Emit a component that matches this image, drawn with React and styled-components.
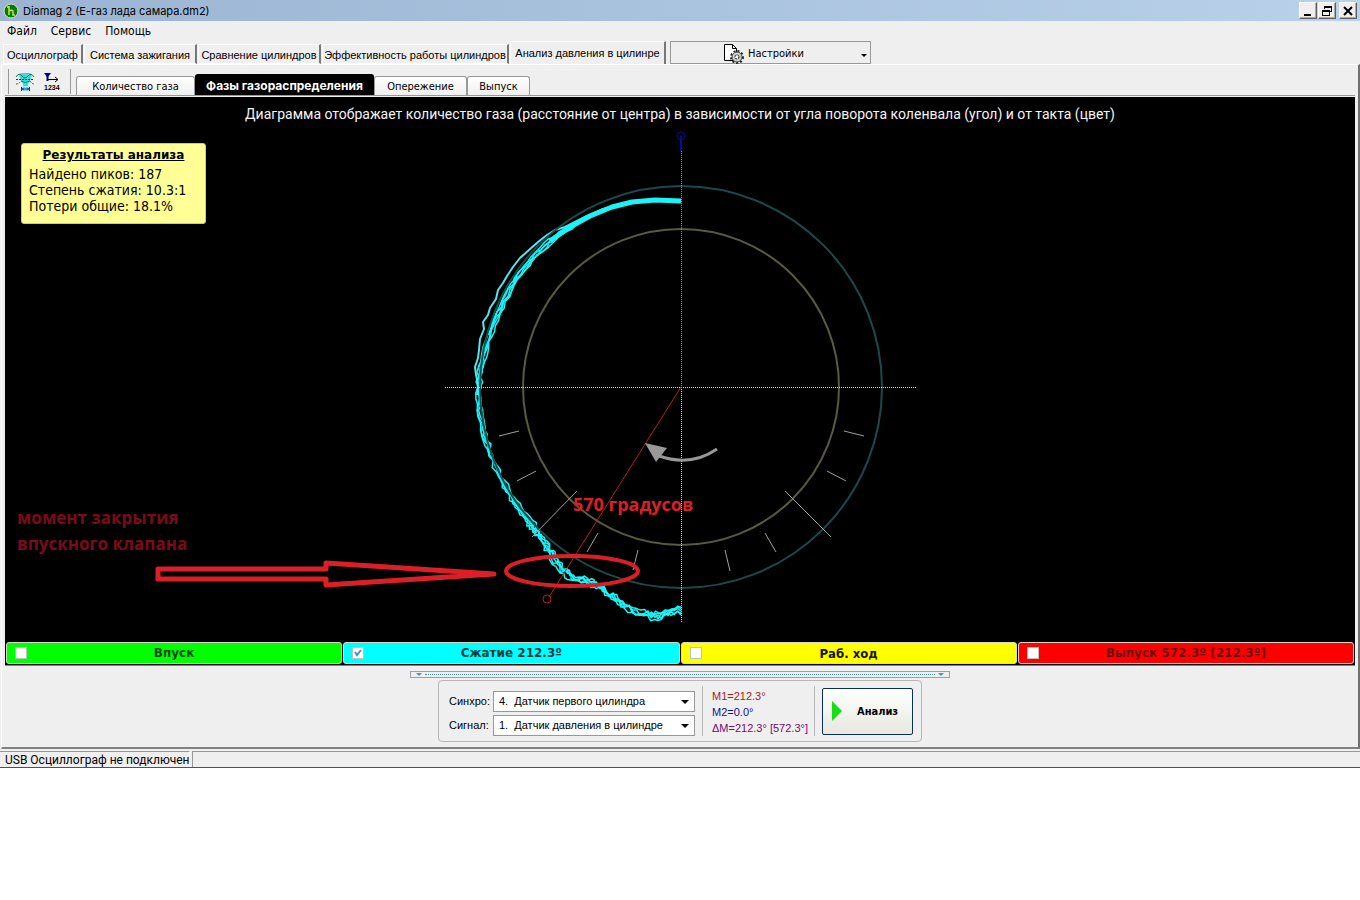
import React, { useState } from "react";
import styled, { createGlobalStyle } from "styled-components";

const mainTabs = [
    { text: "Осциллограф", width: 80 },
    { text: "Система зажигания", width: 113 },
    { text: "Сравнение цилиндров", width: 123 },
    { text: "Эффективность работы цилиндров", width: 187 },
    { text: "Анализ давления в цилинре", width: 156 }
];

const subTabs = [
    { text: "Количество газа", width: 119 },
    { text: "Фазы газораспределения", width: 179 },
    { text: "Опережение", width: 93 },
    { text: "Выпуск", width: 63 }
];

const strokes = [
    { id: "intake", text: "Впуск", color: "#00ff00", ink: "#0a4a0a", wide: true },
    { id: "compression", text: "Сжатие 212.3º", color: "#00ffff", ink: "#063c3c", wide: true },
    { id: "power", text: "Раб. ход", color: "#ffff00", ink: "#141400" },
    { id: "exhaust", text: "Выпуск 572.3º [212.3º]", color: "#ff0000", ink: "#6b0a0a", wide: true }
];

// all the diagram points are counted from the crankshaft centre
const gasCurve = [
    [0, -186], [-26, -187], [-49, -185], [-69, -180], [-91, -171], [-111, -160], [-131, -146],
    [-149, -128], [-165, -108], [-177, -86], [-188, -62], [-195, -40], [-200, -20], [-202, 0],
    [-201, 23], [-197, 48], [-190, 68], [-181, 90], [-171, 108], [-161, 122], [-151, 136],
    [-141, 149], [-131, 163], [-126, 174], [-116, 185], [-106, 191], [-91, 195], [-81, 200],
    [-69, 210], [-56, 219], [-41, 227], [-26, 229], [-13, 227], [0, 222]
];

const strayCurve = "M-60 -182 L-78 -178 L-96 -170 L-116 -160 L-126 -157 L-134 -152 L-143 -145 L-152 -137 L-161 -129 L-168 -120 L-174 -111 L-178 -104 L-183 -97 L-185 -88 L-191 -79 L-193 -72 L-198 -65 L-197 -58 L-201 -48 L-202 -37 L-203 -29 L-206 -20 L-205 -12 L-203 -4 L-204 8";

const ticks = [
    [-182, 49, -162, 44], [-164, 94, -145, 84], [-149, 150, -104, 104], [-94, 165, -83, 146], [-48, 183, -43, 163],
    [183, 49, 163, 44], [165, 94, 146, 84], [150, 150, 104, 104], [95, 165, 84, 146], [49, 184, 44, 163]
];

function makeTrace(seed, index) {
    let s = seed * 7919;
    const random = () => {
        s = (s * 1103515245 + 12345) % 2147483648;
        return s / 2147483648 - 0.5;
    };
    const shift = index - 2;
    const points = [];

    for (let i = 0; i < gasCurve.length - 1; i++) {
        const [x1, y1] = gasCurve[i];
        const [x2, y2] = gasCurve[i + 1];
        const spread = i < 5 ? 1 : i < 12 ? 3 : i < 20 ? 4 : 7;
        const steps = i < 5 ? 2 : 4;
        for (let k = 0; k < steps; k++) {
            const t = k / steps;
            const x = x1 + (x2 - x1) * t;
            const y = y1 + (y2 - y1) * t;
            const r = Math.hypot(x, y);
            const d = (i < 5 ? 0 : shift) + random() * spread;
            points.push(`${(x + x / r * d).toFixed(1)},${(y + y / r * d).toFixed(1)}`);
        }
    }
    points.push(`0,${220 + index * 2}`);
    return points.join(" ");
}

const traces = [1, 2, 3, 4, 5].map(makeTrace);

function PhaseDiagram() {
    return (
        <Diagram viewBox="-676 -290 1350 545">
            <g fill="none" stroke="#18f4f8" strokeWidth="1.5" strokeLinejoin="round">
                {traces.map((points) => <polyline key={points} points={points} />)}
                <path d={strayCurve} stroke="#58e4e8" strokeWidth="2" />
                <path d="M0 -186 L-26 -187 L-49 -185 L-69 -180 L-91 -171 L-111 -160 L-131 -146" strokeWidth="5" />
            </g>
            <g fill="none" strokeWidth="2">
                <circle r="201" stroke="#1c4a4c" />
                <circle r="158" stroke="#5a5a3c" />
            </g>
            <g stroke="#d8d8d8" strokeDasharray="1 1" shapeRendering="crispEdges">
                <path d="M-236 0 H236" />
                <path d="M0 0 V236" />
                <path d="M0 -236 V0" stroke="#7c7cff" />
            </g>
            <g stroke="#a0a0a0" strokeWidth="1">
                {ticks.map(([x1, y1, x2, y2]) => (
                    <line key={`${x1} ${y1}`} x1={x1} y1={y1} x2={x2} y2={y2} />
                ))}
            </g>
            <g fill="none" stroke="#0a0a96" strokeWidth="1">
                <circle cx="0" cy="-251" r="4" />
                <path d="M0 -251 V-236" strokeWidth="2" />
            </g>
            <g fill="none" stroke="#b41e1e" strokeWidth="1">
                <path d="M0 0 L-132 210" />
                <circle cx="-134" cy="212" r="4" />
            </g>
            <path d="M-22 69 Q10 80 36 62" fill="none" stroke="#989898" strokeWidth="3" />
            <path d="M-36 56 L-14 61 L-25 75 Z" fill="#989898" />
            <g fill="none" stroke="#dc1f26" strokeWidth="4">
                <ellipse cx="-109" cy="184" rx="66" ry="15" />
                <path d="M-523 182 H-355 V176 L-187 187 L-355 198 V192 H-523 Z" strokeWidth="5" strokeLinejoin="round" />
            </g>
            <Remark x="-108" y="124" fill="#dc1f26">570 градусов</Remark>
            <Remark x="-664" y="137" fill="#7c0a1a" $small>момент закрытия</Remark>
            <Remark x="-664" y="163" fill="#7c0a1a" $small>впускного клапана</Remark>
        </Diagram>
    );
}

export default function App() {
    const [tab, setTab] = useState(4);
    const [subTab, setSubTab] = useState(1);

    return (
        <Window>
            <GlobalStyle />
            <TitleBar>
                <svg width="16" height="16" viewBox="0 0 16 16">
                    <circle cx="8" cy="8" r="7" fill="#087808" stroke="#d8e8c8" />
                    <path d="M6 3 V12 M4 4 H6 M6 8 Q10 6 10 9 V12 H12" fill="none" stroke="#b8e85c" strokeWidth="1.5" />
                </svg>
                <h1>Diamag 2 (E-газ лада самара.dm2)</h1>
                <WindowButton aria-label="Свернуть">
                    <svg width="12" height="12"><path d="M2 10 H9" stroke="#000" strokeWidth="2" /></svg>
                </WindowButton>
                <WindowButton aria-label="Восстановить">
                    <svg width="12" height="12" viewBox="0 0 12 12" fill="none" stroke="#000" shapeRendering="crispEdges">
                        <path d="M3.5 4 V1.5 H10.5 V6.5 H8 M3 2.5 H11 M1.5 5.5 H8.5 V10.5 H1.5 Z M1 6.5 H9" />
                    </svg>
                </WindowButton>
                <WindowButton aria-label="Закрыть" $apart>
                    <svg width="12" height="12"><path d="M2 2 L10 10 M10 2 L2 10" stroke="#000" strokeWidth="2" /></svg>
                </WindowButton>
            </TitleBar>

            <MenuBar>
                <button>Файл</button>
                <button>Сервис</button>
                <button>Помощь</button>
            </MenuBar>

            <MainTabs>
                {mainTabs.map((item, i) => (
                    <MainTab key={item.text} $width={item.width} $active={i === tab} onClick={() => setTab(i)}>
                        {item.text}
                    </MainTab>
                ))}
                <SettingsButton>
                    <svg width="22" height="20" viewBox="0 0 22 20" fill="none" stroke="#000">
                        <path d="M1.5 0.5 H9.5 L13.5 4.5 V16.5 H1.5 Z" fill="#fff" />
                        <path d="M9.5 0.5 V4.5 H13.5" />
                        <circle cx="14" cy="13" r="6" stroke="#222" strokeWidth="2" strokeDasharray="2 2" />
                        <circle cx="14" cy="13" r="5" fill="#c8d0c8" stroke="#444" />
                        <circle cx="14" cy="13" r="2" fill="#fff" strokeDasharray="2 1" />
                    </svg>
                    <span>Настройки</span>
                    <svg className="arrow" width="6" height="4"><path d="M0 0 H6 L3 3 Z" /></svg>
                </SettingsButton>
            </MainTabs>

            <Page>
                <ToolRow>
                    <Tools>
                        <button aria-label="Фазы">
                            <svg width="20" height="20" viewBox="0 0 20 20" fill="none">
                                <path d="M6 1 H15 L17 3 L15 9 L13 12 V14 H15 V19 H6 V14 H8 V12 L6 9 L4 3 Z" fill="#38dce0" />
                                <path d="M1 5 Q4 0 7 4 Q10 8 13 4 Q16 0 19 5" stroke="#107850" />
                                <path d="M1 7.5 H19" stroke="#183838" strokeDasharray="2 1" />
                                <path d="M6 9 Q10 12 15 9" stroke="#108060" />
                                <path d="M1 12 Q4 12 6 9 M15 9 Q17 12 19 12" stroke="#c83838" strokeDasharray="2 1" />
                                <path d="M6 14 H15 V19 H6 Z" fill="#a8f4f8" />
                                <path d="M6.5 15 V19 M14.5 15 V19 M7 17 H14 M9 15.5 L7.5 17 L9 18.5 M12 15.5 L13.5 17 L12 18.5" stroke="#083080" />
                            </svg>
                        </button>
                        <button aria-label="Синхронизация">
                            <svg width="20" height="20" viewBox="0 0 20 20" fill="none">
                                <path d="M1 1 H8 L5 5 H4 Z" fill="#000090" />
                                <path d="M4.500 3 V9" stroke="#000090" strokeWidth="2" />
                                <path d="M5 7.5 H15 M12 5 L15 7.500 L12 10" stroke="#000" />
                                <IconDigits x="1" y="18">1234</IconDigits>
                            </svg>
                        </button>
                    </Tools>
                    {subTabs.map((item, i) => (
                        <SubTab key={item.text} $width={item.width} $active={i === subTab} onClick={() => setSubTab(i)}>
                            {item.text}
                        </SubTab>
                    ))}
                </ToolRow>

                <Plot>
                    <PhaseDiagram />
                    <PlotTitle>
                        Диаграмма отображает количество газа (расстояние от центра) в зависимости от угла поворота коленвала (угол) и от такта (цвет)
                    </PlotTitle>
                    <Results>
                        <h2>Результаты анализа</h2>
                        <p>Найдено пиков: 187</p>
                        <p>Степень сжатия: 10.3:1</p>
                        <p>Потери общие: 18.1%</p>
                    </Results>
                    <Legend>
                        {strokes.map((item) => (
                            <LegendItem key={item.id} $color={item.color} $ink={item.ink} $wide={item.wide}>
                                <input type="checkbox" defaultChecked={item.id === "compression"} />
                                <span>{item.text}</span>
                            </LegendItem>
                        ))}
                    </Legend>
                </Plot>

                <Splitter>
                    <svg width="8" height="4"><path d="M1 0 H7 L4 3 Z" fill="#4a90c0" /></svg>
                    <i />
                    <svg width="8" height="4"><path d="M1 0 H7 L4 3 Z" fill="#4a90c0" /></svg>
                </Splitter>

                <ControlPanel>
                    <Fields>
                        <label htmlFor="sync">Синхро:</label>
                        <SelectBox>
                            <select id="sync"><option>4.&nbsp; Датчик первого цилиндра</option></select>
                            <svg width="8" height="4"><path d="M0 0 H8 L4 4 Z" /></svg>
                        </SelectBox>
                        <label htmlFor="signal">Сигнал:</label>
                        <SelectBox>
                            <select id="signal"><option>1.&nbsp; Датчик давления в цилиндре</option></select>
                            <svg width="8" height="4"><path d="M0 0 H8 L4 4 Z" /></svg>
                        </SelectBox>
                    </Fields>
                    <Markers>
                        <Marker $color="#b01818">M1=212.3°</Marker>
                        <Marker $color="#10109c">M2=0.0°</Marker>
                        <Marker $color="#780878">ΔM=212.3° [572.3°]</Marker>
                    </Markers>
                    <AnalyzeButton>
                        <svg width="10" height="20"><path d="M0 0 L10 10 L0 20 Z" fill="#14e014" /></svg>
                        <span>Анализ</span>
                    </AnalyzeButton>
                </ControlPanel>
            </Page>

            <StatusBar>
                <span>USB Осциллограф не подключен</span>
                <i />
            </StatusBar>
        </Window>
    );
}

const GlobalStyle = createGlobalStyle`
    body{
        margin: 0;
        background: #fff;
        font-family: "Liberation Sans", sans-serif;
        font-size: 11px;
        color: #000;
    }

    *{
        box-sizing: border-box;
    }

    button, select, input{
        font: inherit;
        color: inherit;
        margin: 0;
    }

    h1, h2, p{
        margin: 0;
    }
`;

const Window = styled.div`
    background: #efefef;
    border-bottom: 1px solid #40546c;
`;

const TitleBar = styled.header`
    height: 21px;
    display: flex;
    align-items: center;
    padding: 0 3px;
    background: linear-gradient(90deg, #9ab4d2, #b9d1ea);

    h1{
        flex: 1;
        padding-left: 4px;
        font-family: Inter, sans-serif;
        font-size: 11px;
        font-weight: 400;
    }
`;

const WindowButton = styled.button`
    width: 18px;
    height: 17px;
    padding: 0;
    display: flex;
    align-items: center;
    justify-content: center;
    background: #efefef;
    border: 1px solid;
    border-color: #fff #606060 #606060 #fff;
    box-shadow: inset -1px -1px 0 #a8a8a8;
    margin-left: ${(props) => (props.$apart ? "3px" : "1px")};
`;

const MenuBar = styled.nav`
    height: 20px;
    display: flex;
    align-items: center;
    gap: 14px;
    padding-left: 7px;

    button{
        border: 0;
        padding: 0;
        background: none;
        font-family: "DejaVu Sans Condensed", sans-serif;
        font-size: 12px;
    }
`;

const MainTabs = styled.div`
    height: 23px;
    display: flex;
    align-items: flex-end;
    padding-left: 3px;
`;

const MainTab = styled.button`
    flex: 0 1 ${(props) => props.$width}px;
    height: ${(props) => (props.$active ? 23 : 20)}px;
    padding: ${(props) => (props.$active ? 0 : "2px")} 0 0;
    margin-right: ${(props) => (props.$active ? 4 : 1)}px;
    white-space: nowrap;
    background: #efefef;
    border: 1px solid #fff;
    border-right: 2px solid #787878;
    border-bottom: ${(props) => (props.$active ? "0" : "1px solid #fff")};
`;

const SettingsButton = styled.button`
    position: relative;
    width: 201px;
    height: 23px;
    padding: 2px 14px 0 0;
    display: flex;
    align-items: center;
    justify-content: center;
    gap: 3px;
    background: #efefef;
    border: 1px solid #989898;
    font-family: "DejaVu Sans Condensed", sans-serif;

    .arrow{
        position: absolute;
        right: 3px;
        top: 12px;
    }
`;

const Page = styled.main`
    border: 1px solid #fff;
    border-right: 2px solid #707070;
    border-bottom: 2px solid #808080;
    margin: 0 0 0 1px;
    padding: 0 3px 5px;
`;

const ToolRow = styled.div`
    height: 31px;
    display: flex;
    align-items: flex-end;
    border-bottom: 1px solid #989898;
`;

const Tools = styled.div`
    display: flex;
    align-items: center;
    gap: 8px;
    height: 25px;
    width: 63px;
    margin: 0 5px 1px 3px;
    padding-left: 6px;
    border-left: 1px solid #989898;
    border-right: 1px solid #989898;

    button{
        width: 20px;
        height: 20px;
        padding: 0;
        border: 0;
        background: none;
    }
`;

const IconDigits = styled.text`
    fill: #000;
    font-family: "Liberation Sans", sans-serif;
    font-size: 7px;
    font-weight: 700;
`;

const SubTab = styled.button`
    flex: 0 1 ${(props) => props.$width}px;
    height: ${(props) => (props.$active ? 21 : 19)}px;
    padding: 0;
    white-space: nowrap;
    border: 1px solid ${(props) => (props.$active ? "#000" : "#989898")};
    border-bottom: 0;
    border-radius: 3px 3px 0 0;
    background: ${(props) => (props.$active ? "#000" : "linear-gradient(#fff, #efefef)")};
    color: ${(props) => (props.$active ? "#fff" : "#000")};
    font-family: ${(props) => (props.$active ? "Inter" : '"DejaVu Sans Condensed"')}, sans-serif;
    font-size: ${(props) => (props.$active ? 12 : 11)}px;
    font-weight: ${(props) => (props.$active ? 700 : 400)};
`;

const Plot = styled.section`
    position: relative;
    margin-top: 1px;
    background: #000;
    border-bottom: 1px solid #808080;
`;

const Diagram = styled.svg`
    display: block;
    width: 100%;
`;

const Remark = styled.text`
    font-family: "Open Sans", "Noto Sans", sans-serif;
    font-size: ${(props) => (props.$small ? 17 : 18)}px;
    font-weight: 700;
`;

const PlotTitle = styled.p`
    position: absolute;
    top: 9px;
    left: 0;
    width: 100%;
    text-align: center;
    color: #f4f4f4;
    font-family: Roboto, sans-serif;
    font-size: 14px;
    line-height: 16px;
`;

const Results = styled.div`
    position: absolute;
    top: 46px;
    left: 16px;
    width: 185px;
    padding: 3px 7px 9px;
    border: 1px solid #c8c890;
    border-radius: 3px;
    background: #ffff96;
    font-family: "DejaVu Sans Condensed", sans-serif;
    font-size: 14px;
    line-height: 16px;

    h2{
        margin-bottom: 3px;
        text-align: center;
        text-decoration: underline;
        font-family: "DejaVu Sans", sans-serif;
        font-size: 12px;
        line-height: 16px;
        font-weight: 700;
    }
`;

const Legend = styled.div`
    display: grid;
    grid-template-columns: repeat(4, 1fr);
    gap: 1px;
    padding: 0 1px 1px;
`;

const LegendItem = styled.label`
    height: 22px;
    display: grid;
    grid-template-columns: 12px 1fr 12px;
    align-items: center;
    padding: 0 8px;
    background: ${(props) => props.$color};
    color: ${(props) => props.$ink};
    border: 1px solid #d8d8c8;
    border-radius: 3px;
    font-family: ${(props) => (props.$wide ? '"DejaVu Sans"' : '"DejaVu Sans Condensed"')}, sans-serif;
    font-size: ${(props) => (props.$wide ? 12 : 13)}px;
    font-weight: 700;

    span{
        text-align: center;
    }

    input{
        appearance: none;
        width: 12px;
        height: 12px;
        background: #fff;
        border: 1px solid #b8c8b8;
    }

    input:checked{
        background: #fff url("data:image/svg+xml,%3Csvg xmlns='http://www.w3.org/2000/svg' viewBox='0 0 10 10'%3E%3Cpath d='M2 4 L4 7 L8 2' fill='none' stroke='%234a90c0' stroke-width='2'/%3E%3C/svg%3E");
    }
`;

const Splitter = styled.div`
    display: flex;
    align-items: center;
    gap: 2px;
    width: 540px;
    height: 7px;
    margin: 5px auto 2px;
    padding: 0 4px;
    border: 1px solid #98a0b0;

    i{
        flex: 1;
        border-top: 1px dotted #4a90c0;
    }
`;

const ControlPanel = styled.div`
    display: flex;
    align-items: center;
    width: 484px;
    height: 62px;
    margin: 0 auto;
    padding: 0 8px 0 10px;
    border: 1px solid #b8b8b8;
    border-radius: 4px;
`;

const Fields = styled.div`
    display: grid;
    grid-template-columns: 44px 202px;
    row-gap: 3px;
    align-items: center;
    padding-top: 4px;
`;

const SelectBox = styled.div`
    position: relative;

    select{
        display: block;
        appearance: none;
        width: 100%;
        height: 21px;
        padding: 0 20px 0 5px;
        border: 1px solid #989898;
        border-radius: 0;
        background: #fff;
    }

    svg{
        position: absolute;
        right: 6px;
        top: 9px;
        pointer-events: none;
    }
`;

const Markers = styled.div`
    width: 113px;
    height: 50px;
    margin: 0 7px;
    padding: 2px 0 0 9px;
    border-left: 1px solid #b8b8b8;
    border-right: 1px solid #b8b8b8;
`;

const Marker = styled.p`
    color: ${(props) => props.$color};
    font-size: 11px;
    line-height: 16px;
    white-space: nowrap;
`;

const AnalyzeButton = styled.button`
    display: flex;
    align-items: center;
    gap: 15px;
    width: 91px;
    height: 47px;
    padding: 0 9px;
    border: 1px solid #083058;
    border-radius: 2px;
    background: linear-gradient(#fff, #e8e8e0);
    font-family: "DejaVu Sans Condensed", sans-serif;
    font-weight: 700;
`;

const StatusBar = styled.footer`
    display: flex;
    gap: 2px;
    height: 18px;
    padding-top: 2px;

    span{
        width: 190px;
        padding-left: 5px;
        font-family: Roboto, sans-serif;
        font-size: 12px;
        line-height: 16px;
        white-space: nowrap;
        border-top: 1px solid #989898;
        border-right: 1px solid #fff;
    }

    i{
        flex: 1;
        border-top: 1px solid #989898;
        border-left: 1px solid #989898;
    }
`;
